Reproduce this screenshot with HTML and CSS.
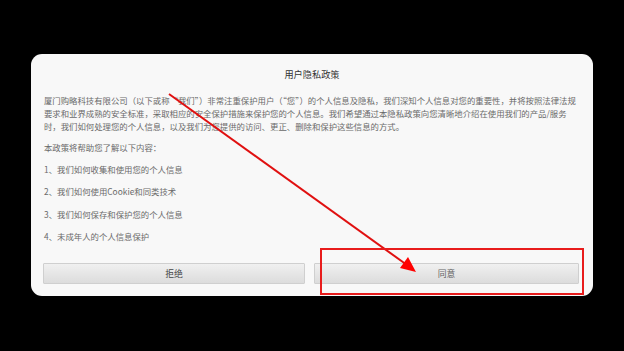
FILE: index.html
```html
<!DOCTYPE html>
<html lang="zh-CN">
<head>
<meta charset="utf-8">
<link rel="stylesheet" href="styles.css">
</head>
<body>
<div class="stage">
  <div class="dialog">
    <h1 class="title">用户隐私政策</h1>
    <p class="intro">厦门购略科技有限公司（以下或称“我们”）非常注重保护用户（“您”）的个人信息及隐私，我们深知个人信息对您的重要性，并将按照法律法规要求和业界成熟的安全标准，采取相应的安全保护措施来保护您的个人信息。我们希望通过本隐私政策向您清晰地介绍在使用我们的产品/服务时，我们如何处理您的个人信息，以及我们为您提供的访问、更正、删除和保护这些信息的方式。</p>
    <p class="lead">本政策将帮助您了解以下内容：</p>
    <ul class="list">
      <li>1、我们如何收集和使用您的个人信息</li>
      <li>2、我们如何使用Cookie和同类技术</li>
      <li>3、我们如何保存和保护您的个人信息</li>
      <li>4、未成年人的个人信息保护</li>
    </ul>
    <div class="actions">
      <button class="btn btn-refuse">拒绝</button>
      <button class="btn btn-agree">同意</button>
    </div>
  </div>
  <svg class="annot" width="624" height="351" viewBox="0 0 624 351">
    <line x1="169" y1="94" x2="407" y2="265" stroke="#e01010" stroke-width="2"/>
    <polygon points="416,272 400,268 408,257" fill="#ff0000"/>
    <rect x="321" y="249" width="262" height="45" fill="none" stroke="#e81c1c" stroke-width="2"/>
  </svg>
</div>
</body>
</html>
```
FILE: styles.css
```css
html, body {
  margin: 0;
  padding: 0;
  background: #000;
}
.stage {
  position: relative;
  width: 624px;
  height: 351px;
  padding: 54px 0 0 31px;
  box-sizing: border-box;
}
.dialog {
  width: 562px;
  height: 242px;
  box-sizing: border-box;
  background: #f8f8f8;
  border-radius: 11px;
  padding: 14px 14px 12px 12px;
  display: flex;
  flex-direction: column;
  font-family: "Noto Sans CJK SC", "Noto Sans", sans-serif;
  color: #6a6a6a;
  font-size: 8.4px;
  line-height: 13px;
}
.title {
  margin: 0;
  font-size: 9.2px;
  font-weight: normal;
  line-height: 13px;
  text-align: center;
  color: #333;
  padding-left: 2px;
}
.intro {
  margin: 13px 0 0 1px;
}
.lead {
  margin: 8px 0 0 1px;
}
.list {
  list-style: none;
  margin: 9px 0 0 1px;
  padding: 0;
  display: flex;
  flex-direction: column;
  gap: 9.3px;
}
.actions {
  margin-top: auto;
  display: flex;
  gap: 9px;
}
.btn {
  height: 21px;
  border: 1px solid #cfcfcf;
  border-radius: 1px;
  background: linear-gradient(#f0f0f0, #dcdcdc);
  font-family: "Noto Sans CJK SC", "Noto Sans", sans-serif;
  font-size: 8.8px;
  color: #444;
  padding: 0;
}
.btn-refuse {
  flex: 262 1 0;
}
.btn-agree {
  flex: 265 1 0;
  color: #666;
}
.annot {
  position: absolute;
  left: 0;
  top: 0;
}
```
